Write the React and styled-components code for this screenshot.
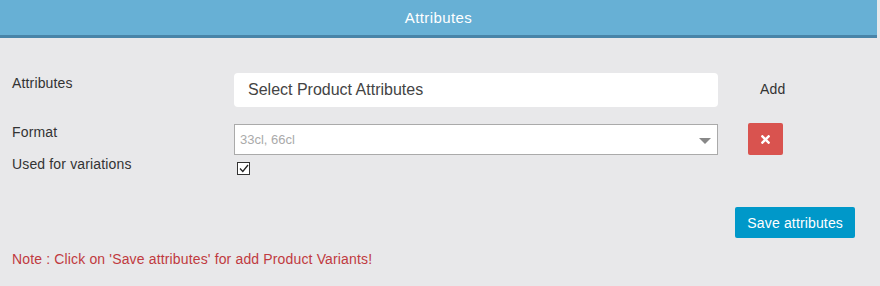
import React from "react";
import styled, { createGlobalStyle } from "styled-components";
import { FaTimes } from "react-icons/fa";

const GlobalStyle = createGlobalStyle`
  body {
    margin: 0;
    background: #e8e8ea;
    font-family: "Liberation Sans", Arial, sans-serif;
  }
`;

const Panel = styled.div`
  width: 880px;
  height: 286px;
  background: #e8e8ea;
`;

const Header = styled.div`
  height: 35px;
  width: 877px;
  background: #67b0d5;
  border-bottom: 3px solid #4884a8;
  color: #fff;
  font-size: 15px;
  letter-spacing: 0.4px;
  display: flex;
  align-items: center;
  justify-content: center;
`;

const Body = styled.div`
  padding: 35px 25px 0 12px;
`;

const Row = styled.div`
  display: grid;
  grid-template-columns: 222px 484px 30px auto;
  align-items: start;
  margin-top: ${(p) => p.$mt || 0}px;
`;

const Label = styled.div`
  font-size: 14px;
  line-height: 18px;
  letter-spacing: 0.15px;
  color: #333;
  padding-top: ${(p) => p.$pt || 0}px;
`;

const TextBox = styled.div`
  height: 34px;
  background: #fff;
  border-radius: 4px;
  display: flex;
  align-items: center;
  padding-left: 14px;
  font-size: 16px;
  color: #444;
`;

const SelectBox = styled.div`
  height: 29px;
  background: #fff;
  border: 1px solid #aaa;
  margin-top: 1px;
  display: flex;
  align-items: center;
  justify-content: space-between;
  padding: 0 6px 0 5px;
  font-size: 13px;
  color: #aaa;
`;

const Arrow = styled.span`
  width: 0;
  height: 0;
  border-left: 6px solid transparent;
  border-right: 6px solid transparent;
  border-top: 6px solid #888;
  margin-top: 2px;
`;

const AddText = styled.div`
  grid-column: 4;
  font-size: 14px;
  letter-spacing: 0.15px;
  color: #333;
  padding: 8px 0 0 12px;
`;

const RemoveButton = styled.button`
  grid-column: 4;
  width: 35px;
  height: 32px;
  border: none;
  border-radius: 2px;
  background: #d9534f;
  color: #fff;
  display: flex;
  align-items: center;
  justify-content: center;
  padding: 0;
  font-size: 13px;
`;

const CheckBox = styled.span`
  width: 11px;
  height: 11px;
  margin: 7px 0 0 3px;
  border: 1px solid #333;
  background: #fff;
  display: flex;
  align-items: center;
  justify-content: center;
`;

const Actions = styled.div`
  display: flex;
  justify-content: flex-end;
  margin-top: 32px;
`;

const SaveButton = styled.button`
  height: 31px;
  padding: 0 12px;
  border: none;
  border-radius: 2px;
  background: #0098c9;
  color: #fff;
  font-family: "Liberation Sans", Arial, sans-serif;
  font-size: 14px;
  letter-spacing: 0.15px;
`;

const Note = styled.div`
  margin-top: 13px;
  font-size: 14px;
  letter-spacing: 0.15px;
  color: #c03a40;
`;

export default function App() {
  return (
    <>
      <GlobalStyle />
      <Panel>
        <Header>Attributes</Header>
        <Body>
          <Row>
            <Label $pt={1}>Attributes</Label>
            <TextBox>Select Product Attributes</TextBox>
            <AddText>Add</AddText>
          </Row>
          <Row $mt={16}>
            <Label $pt={0}>Format</Label>
            <SelectBox>
              33cl, 66cl
              <Arrow />
            </SelectBox>
            <RemoveButton>
              <FaTimes />
            </RemoveButton>
          </Row>
          <Row>
            <Label $pt={0}>Used for variations</Label>
            <CheckBox>
              <svg width="10" height="9" viewBox="0 0 10 9">
                <path d="M1 4.5 L3.8 7.5 L9 1" fill="none" stroke="#222" strokeWidth="1.3" />
              </svg>
            </CheckBox>
          </Row>
          <Actions>
            <SaveButton>Save attributes</SaveButton>
          </Actions>
          <Note>Note : Click on 'Save attributes' for add Product Variants!</Note>
        </Body>
      </Panel>
    </>
  );
}
